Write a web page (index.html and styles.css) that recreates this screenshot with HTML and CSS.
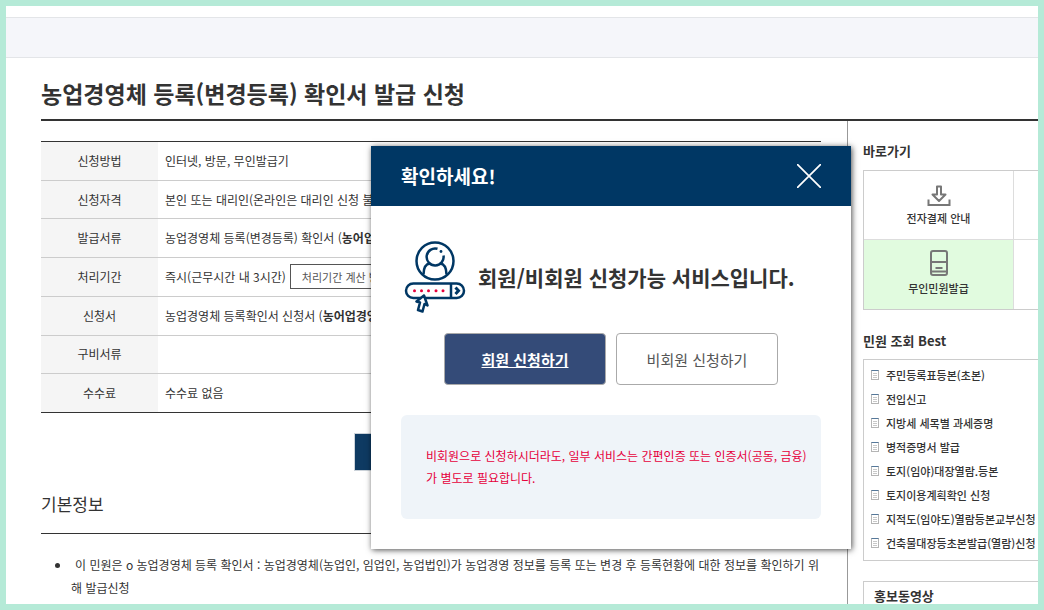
FILE: index.html
```html
<!DOCTYPE html>
<html lang="ko">
<head>
<meta charset="utf-8">
<title>농업경영체 등록(변경등록) 확인서 발급 신청</title>
<link rel="stylesheet" href="styles.css">
</head>
<body>
<div class="page">
  <div class="topbar"></div>
  <div class="content">
    <h1 class="title">농업경영체 등록(변경등록) 확인서 발급 신청</h1>
    <div class="columns">
      <main class="main">
        <table class="info">
          <tbody>
            <tr><th scope="row">신청방법</th><td>인터넷, 방문, 무인발급기</td></tr>
            <tr><th scope="row">신청자격</th><td>본인 또는 대리인(온라인은 대리인 신청 불가)</td></tr>
            <tr><th scope="row">발급서류</th><td>농업경영체 등록(변경등록) 확인서 (<b>농어업경영</b></td></tr>
            <tr><th scope="row">처리기간</th><td><div class="period">즉시(근무시간 내 3시간)<button class="calc" type="button">처리기간 계산 방법</button></div></td></tr>
            <tr><th scope="row">신청서</th><td>농업경영체 등록확인서 신청서 (<b>농어업경영</b></td></tr>
            <tr><th scope="row">구비서류</th><td></td></tr>
            <tr><th scope="row">수수료</th><td>수수료 없음</td></tr>
          </tbody>
        </table>
        <button class="issue" type="button" aria-label="발급"></button>
        <h2 class="section">기본정보</h2>
        <ul class="notes">
          <li>이 민원은 o 농업경영체 등록 확인서 : 농업경영체(농업인, 임업인, 농업법인)가 농업경영 정보를 등록 또는 변경 후 등록현황에 대한 정보를 확인하기 위해 발급신청</li>
        </ul>
      </main>
      <aside class="side">
        <h2 class="side-title">바로가기</h2>
        <div class="shortcuts">
          <a class="shortcut" href="#">
            <svg width="24" height="22" viewBox="0 0 24 22" fill="none" stroke="#777" stroke-width="2"><path d="M1.500 14.500V20H22.500V14.500"/><path d="M10 1.500H14V9.500H18.500L12 16L5.500 9.500H10Z" stroke-linejoin="round"/></svg>
            전자결제 안내
          </a>
          <span class="blank"></span>
          <a class="shortcut active" href="#">
            <svg width="24" height="28" viewBox="0 0 24 28" fill="none" stroke="#777" stroke-width="2"><rect x="4" y="2" width="16" height="24" rx="2"/><path d="M4 13H20M4 22.500H20M8.500 19H15.500"/></svg>
            무인민원발급
          </a>
          <span class="blank"></span>
        </div>
        <h2 class="side-title">민원 조회 Best</h2>
        <ul class="best">
          <li><a href="#">주민등록표등본(초본)</a></li>
          <li><a href="#">전입신고</a></li>
          <li><a href="#">지방세 세목별 과세증명</a></li>
          <li><a href="#">병적증명서 발급</a></li>
          <li><a href="#">토지(임야)대장열람.등본</a></li>
          <li><a href="#">토지이용계획확인 신청</a></li>
          <li><a href="#">지적도(임야도)열람등본교부신청</a></li>
          <li><a href="#">건축물대장등초본발급(열람)신청</a></li>
        </ul>
        <div class="promo"><h2>홍보동영상</h2></div>
      </aside>
    </div>
  </div>
  <div class="modal" role="dialog" aria-labelledby="modal-title">
    <div class="modal-head">
      <h2 id="modal-title">확인하세요!</h2>
      <button class="close" type="button" aria-label="닫기"><svg width="24" height="24" viewBox="0 0 24 24" stroke="#fff" stroke-width="1.700"><path d="M0 0L24 24M24 0L0 24"/></svg></button>
    </div>
    <div class="modal-body">
      <div class="lead">
        <svg width="62" height="72" viewBox="0 0 62 72" fill="none" stroke="#003764" stroke-width="2.500">
          <circle cx="31" cy="20" r="18.500"/>
          <path d="M33.500 7.800A8.500 8.500 0 1 0 39.500 14.500"/>
          <circle cx="37" cy="10.500" r="1.400" fill="#003764" stroke="none"/>
          <path d="M19.500 33.500C19.500 27 22 23 26 22.500M42.500 33.500C42.500 27 40 23 36 22.500"/>
          <rect x="2" y="42.500" width="58" height="14.500" rx="7.250"/>
          <path d="M47 42.500V57"/>
          <path d="M51.500 46.500L54.500 49.750L51.500 53" stroke-width="3"/>
          <g fill="#e6003c" stroke="none"><circle cx="10.500" cy="49.700" r="1.500"/><circle cx="17.500" cy="49.700" r="1.500"/><circle cx="24.500" cy="49.700" r="1.500"/><circle cx="32" cy="49.700" r="1.500"/><circle cx="39" cy="49.700" r="1.500"/></g>
          <path fill="#fff" stroke-linejoin="round" d="M20 54.500L12.500 60.500L16 61.500L14 69L18.500 70.500L20.500 63L23.500 64.500Z"/>
        </svg>
        <strong>회원/비회원 신청가능 서비스입니다.</strong>
      </div>
      <div class="actions">
        <button class="btn primary" type="button">회원 신청하기</button>
        <button class="btn" type="button">비회원 신청하기</button>
      </div>
      <p class="warn">비회원으로 신청하시더라도, 일부 서비스는 간편인증 또는 인증서(공동, 금융)가 별도로 필요합니다.</p>
    </div>
  </div>
</div>
</body>
</html>
```
FILE: styles.css
```css
* { box-sizing: border-box; }
body { margin: 0; color: #333; font: 12px/22px "Noto Sans CJK KR", sans-serif; }
h1, h2, p, ul { margin: 0; padding: 0; }
ul { list-style: none; }
a { color: inherit; text-decoration: none; }
button { font-family: inherit; padding: 0; }
svg { display: block; }

.page { position: relative; height: 100vh; overflow: hidden; background: #fff; border: 6px solid #b5ead7; }
.topbar { height: 41px; margin-top: 11px; background: #f5f6fa; border: solid #e3e5e8; border-width: 1px 0; }
.content { padding-left: 35px; }
.title { padding: 17px 0 7px; font-size: 23px; line-height: 37px; font-weight: 700; border-bottom: 2px solid #333; }
.columns { display: grid; grid-template-columns: 1fr 191px; }
.main { padding: 20px 26px 0 0; }

.info { width: 100%; height: 272px; border-collapse: collapse; border: solid #333; border-width: 1px 0; }
.info tr { height: 38px; }
.info th, .info td { padding: 0 7px; border-bottom: 1px solid #ccc; }
.info tr:last-child > * { border-bottom-color: #333; }
.info th { width: 117px; font-weight: 400; background: #f5f5f5; }
.period { display: flex; align-items: center; gap: 4px; white-space: nowrap; }
.calc { height: 25px; padding: 0 11px; color: #555; background: #fff; border: 1px solid #555; font-size: 11px; }
.issue { display: block; width: 154px; height: 38px; margin: 20px auto 0; background: #0e3a62; border: 1px solid #ccd3da; }
.section { margin-top: 19px; padding-bottom: 15px; font-size: 17px; line-height: 28px; font-weight: 400; border-bottom: 1px solid #333; }
.notes { padding: 19px 0 0 30px; list-style: disc; line-height: 23px; }
.notes li { text-indent: 4px; }

.side { padding: 17px 0 0 15px; border-left: 1px solid #999; }
.side-title { font-size: 13px; line-height: 26px; font-weight: 700; }
.shortcuts { display: grid; grid-template-columns: 150px 1fr; margin: 6px 0 18px; border: solid #ccc; border-width: 1px 0 1px 1px; }
.shortcut { display: flex; flex-direction: column; align-items: center; justify-content: flex-end; height: 69px; padding-bottom: 10px; font-size: 11px; font-weight: 500; border-right: 1px solid #ddd; }
.shortcut.active { background: #e1fbdf; }
.shortcut:first-child, .shortcut:first-child + .blank { border-bottom: 1px solid #ddd; }
.best { margin-top: 5px; padding: 3px 0 5px 7px; border: solid #ccc; border-width: 1px 0 1px 1px; font-size: 11px; line-height: 24px; font-weight: 500; white-space: nowrap; }
.best li { display: flex; align-items: center; gap: 7px; }
.best li::before { content: ""; box-sizing: border-box; flex: none; width: 8px; height: 10px; padding: 1px; border: 1px solid #b5b5b5; border-top-color: #55789a; background: repeating-linear-gradient(#fff 0 1px, #c8c8c8 1px 2px) content-box; }
.promo { margin-top: 20px; padding: 2px 10px; border: solid #ccc; border-width: 1px 0 0 1px; }
.promo h2 { font-size: 13px; line-height: 24px; }

.modal { position: absolute; left: 365px; top: 140px; width: 480px; background: #fff; box-shadow: 1px 1px 6px rgba(0, 0, 0, .7); }
.modal-head { display: flex; align-items: center; justify-content: space-between; height: 60px; padding: 0 30px; color: #fff; background: #003764; }
.modal-head h2 { font-size: 19px; font-weight: 700; }
.close { background: none; border: 0; }
.modal-body { padding: 35px 30px 30px; }
.lead { display: flex; align-items: center; gap: 12px; padding-left: 3px; font-size: 21px; line-height: 32px; }
.lead strong { font-weight: 700; }
.actions { display: flex; justify-content: center; gap: 10px; margin: 20px 0 30px; }
.btn { width: 162px; height: 52px; color: #555; background: #fff; border: 1px solid #aaa; border-radius: 4px; font-size: 15px; }
.primary { color: #fff; background: #344b78; font-weight: 700; text-decoration: underline; }
.warn { padding: 30px 10px 30px 25px; color: #e6003c; background: #eff4f9; border-radius: 6px; }
```
